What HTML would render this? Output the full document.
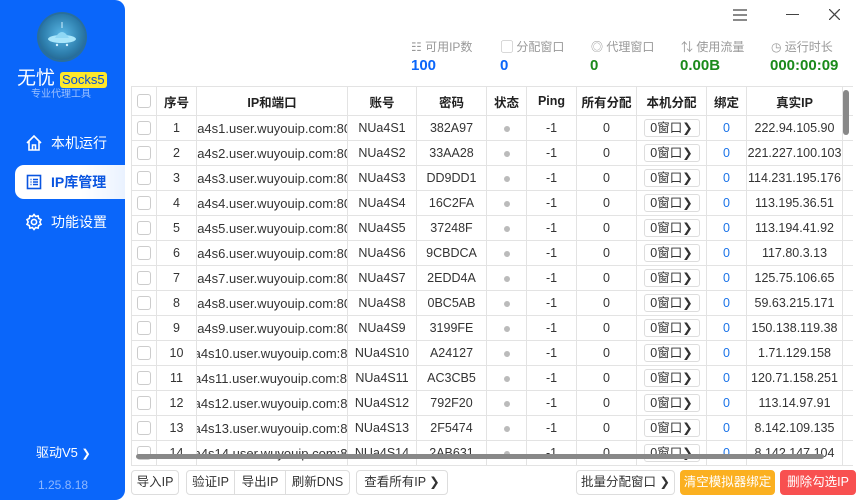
<!DOCTYPE html>
<html><head><meta charset="utf-8">
<style>
*{box-sizing:border-box;margin:0;padding:0}
body{width:860px;height:500px;background:#fff;font-family:"Liberation Sans","Noto Sans CJK SC",sans-serif;position:relative;overflow:hidden;color:#333}
.side{position:absolute;left:0;top:0;width:125px;height:500px;background:#0a66fa;border-radius:0 10px 10px 0;color:#fff}
.logo{position:absolute;left:39px;top:14px;width:46px;height:46px;border-radius:50%;background:radial-gradient(circle at 50% 45%,#5ab8e6 0,#2e7fae 55%,#1d4f74 100%);box-shadow:0 0 0 2px #2a6f9a}
.brand{position:absolute;left:17px;top:66px;font-size:19px;line-height:26px}
.socks{position:absolute;left:60px;top:72px;background:#ffe82a;color:#0a4fd8;font-size:13px;padding:0 2px;border-radius:3px;line-height:16px}
.sub{position:absolute;left:31px;top:89px;font-size:10px;color:#9cc1ff;line-height:12px}
.nav{position:absolute;left:15px;width:110px;height:34px;font-size:14px;display:flex;align-items:center;padding-left:36px}
.nav svg{position:absolute;left:10px;top:8px}
.act{background:linear-gradient(90deg,#fff 60%,#eaf2ff);border-radius:9px 0 0 9px;color:#0a55e0;font-weight:bold}
.drv{position:absolute;left:36px;top:442px;font-size:13px}
.stat{position:absolute;top:38px;font-size:12px;color:#999}
.val{position:absolute;top:57px;font-size:15px;font-weight:bold}
table{position:absolute;left:131px;top:86px;width:721px;border-collapse:collapse;table-layout:fixed;font-size:12.5px}
td,th{border:1px solid #e3e3e3;height:25px;text-align:center;overflow:hidden;white-space:nowrap;padding:0}
th{height:29px;font-weight:bold;font-size:12.5px;color:#222}
.cb{display:inline-block;width:14px;height:14px;border:1px solid #ccc;border-radius:3px;vertical-align:middle}
.ip{display:flex;justify-content:center;overflow:hidden;width:150px;font-size:13px}
.dot{display:inline-block;width:6px;height:6px;border-radius:50%;background:#bbb}
.sel{display:inline-block;border:1px solid #ddd;border-radius:3px;width:56px;height:18px;line-height:16px;font-size:12.5px}
.b{color:#1a73e8}
.btn{position:absolute;top:470px;height:25px;border:1px solid #ddd;border-radius:4px;font-size:12.5px;line-height:23px;text-align:center;background:#fff}
</style></head><body>
<div class="side">
<div class="logo"><svg width="46" height="46" viewBox="0 0 46 46"><ellipse cx="23" cy="25" rx="14" ry="4" fill="#a9e6fb"/><path d="M16 24 Q23 12 30 24Z" fill="#8fd8f5"/><circle cx="18" cy="31" r="1.2" fill="#cfefff"/><circle cx="28" cy="31" r="1.2" fill="#cfefff"/><line x1="23" y1="8" x2="23" y2="14" stroke="#cfefff"/></svg></div>
<div class="brand">无忧</div><div class="socks">Socks5</div>
<div class="sub">专业代理工具</div>
<div class="nav" style="top:126px"><svg width="18" height="18" viewBox="0 0 18 18" fill="none" stroke="#fff" stroke-width="1.6"><path d="M2 9 L9 2 L16 9 M4 7 V16 H14 V7 M7.5 16 V11 H10.5 V16"/></svg>本机运行</div>
<div class="nav act" style="top:165px"><svg width="18" height="18" viewBox="0 0 18 18" fill="none" stroke="#0a55e0" stroke-width="1.6"><rect x="2.5" y="2.5" width="13" height="13"/><path d="M5.5 6.5h1M8 6.5h5M5.5 9h1M8 9h5M5.5 11.5h1M8 11.5h5"/></svg>IP库管理</div>
<div class="nav" style="top:205px"><svg width="18" height="18" viewBox="0 0 18 18" fill="none" stroke="#fff" stroke-width="1.6"><circle cx="9" cy="9" r="2.6"/><path d="M9 1.5l1.6 2 2.5-.6.6 2.5 2.3 1.2-1.2 2.4 1.2 2.4-2.3 1.2-.6 2.5-2.5-.6L9 16.5l-1.6-2-2.5.6-.6-2.5-2.3-1.2L3.2 9 2 6.6l2.3-1.2.6-2.5 2.5.6z"/></svg>功能设置</div>
<div class="drv">驱动V5 <span style="font-size:11px">❯</span></div>
<div style="position:absolute;left:38px;top:478px;font-size:12px;color:#8fb8ff">1.25.8.18</div>
</div>
<svg style="position:absolute;left:733px;top:9px" width="14" height="12"><path d="M0 1h14M0 6h14M0 11h14" stroke="#444" stroke-width="1.3"/></svg>
<div style="position:absolute;left:786px;top:14px;width:13px;height:1px;background:#444"></div>
<svg style="position:absolute;left:829px;top:9px" width="11" height="11"><path d="M0 0L11 11M11 0L0 11" stroke="#444" stroke-width="1.3"/></svg>
<div class="stat" style="left:411px">☷ 可用IP数</div><div class="val" style="left:411px;color:#0a66fa">100</div>
<div class="stat" style="left:501px">▢ 分配窗口</div><div class="val" style="left:500px;color:#0a66fa">0</div>
<div class="stat" style="left:591px">◎ 代理窗口</div><div class="val" style="left:590px;color:#1a8a1a">0</div>
<div class="stat" style="left:681px">⇅ 使用流量</div><div class="val" style="left:680px;color:#1a8a1a">0.00B</div>
<div class="stat" style="left:771px">◷ 运行时长</div><div class="val" style="left:770px;color:#1a8a1a">000:00:09</div>
<table>
<colgroup><col style="width:25px"><col style="width:40px"><col style="width:151px"><col style="width:69px"><col style="width:70px"><col style="width:40px"><col style="width:50px"><col style="width:60px"><col style="width:70px"><col style="width:40px"><col style="width:96px"><col style="width:10px"></colgroup>
<tr><th><span class="cb"></span></th><th>序号</th><th>IP和端口</th><th>账号</th><th>密码</th><th>状态</th><th>Ping</th><th>所有分配</th><th>本机分配</th><th>绑定</th><th>真实IP</th><th style="border-right:none"></th></tr>
<tbody id="tb"></tbody>
</table>
<div style="position:absolute;left:843px;top:90px;width:6px;height:45px;border-radius:3px;background:#888"></div>
<div style="position:absolute;left:136px;top:454px;width:688px;height:5px;border-radius:3px;background:#888"></div>
<div class="btn" style="left:131px;width:48px">导入IP</div>
<div class="btn" style="left:186px;width:164px;display:flex"><span style="width:48px;border-right:1px solid #ddd">验证IP</span><span style="width:51px;border-right:1px solid #ddd">导出IP</span><span style="flex:1">刷新DNS</span></div>
<div class="btn" style="left:356px;width:92px">查看所有IP ❯</div>
<div class="btn" style="left:576px;width:99px">批量分配窗口 ❯</div>
<div class="btn" style="left:680px;width:95px;background:#fbb020;border-color:#fbb020;color:#fff">清空模拟器绑定</div>
<div class="btn" style="left:780px;width:76px;background:#f85050;border-color:#f85050;color:#fff">删除勾选IP</div>
<script>
var pw=["382A97","33AA28","DD9DD1","16C2FA","37248F","9CBDCA","2EDD4A","0BC5AB","3199FE","A24127","AC3CB5","792F20","2F5474","2AB631"];
var rip=["222.94.105.90","221.227.100.103","114.231.195.176","113.195.36.51","113.194.41.92","117.80.3.13","125.75.106.65","59.63.215.171","150.138.119.38","1.71.129.158","120.71.158.251","113.14.97.91","8.142.109.135","8.142.147.104"];
var h="";for(var i=0;i<14;i++){var n=i+1;h+='<tr><td><span class="cb"></span></td><td>'+n+'</td><td><div class="ip"><span>NUa4s'+n+'.user.wuyouip.com:8000</span></div></td><td>NUa4S'+n+'</td><td>'+pw[i]+'</td><td><span class="dot"></span></td><td>-1</td><td>0</td><td><span class="sel">0窗口❯</span></td><td class="b">0</td><td>'+rip[i]+'</td><td style="border-right:none"></td></tr>';}
document.getElementById("tb").innerHTML=h;
</script>
</body></html>
